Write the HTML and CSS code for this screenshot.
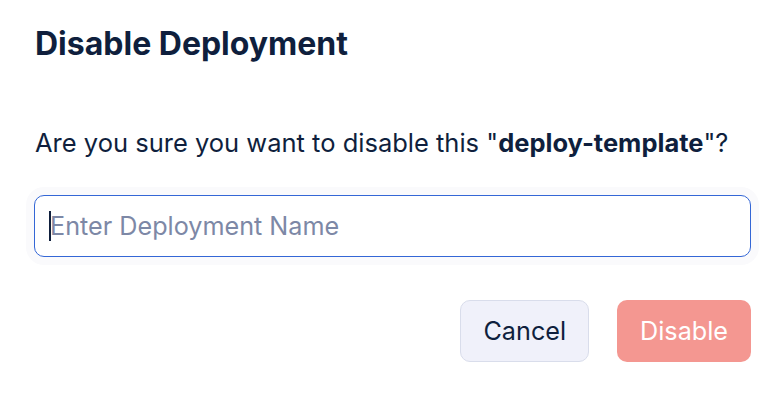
FILE: index.html
```html
<!DOCTYPE html>
<html lang="en">
<head>
<meta charset="UTF-8" />
<meta name="viewport" content="width=device-width, initial-scale=1" />
<title>Disable Deployment</title>
<link rel="stylesheet" href="styles.css">
</head>
<body>

<div class="modal">
  <h2 class="modal-title">Disable Deployment</h2>

  <p class="modal-text">Are you sure you want to disable this "<b>deploy-template</b>"?</p>

  <div class="field">
    <input id="deployName" type="text" placeholder="Enter Deployment Name" />
    <span class="caret"></span>
  </div>

  <div class="actions">
    <button class="btn btn-cancel">Cancel</button>
    <button class="btn btn-danger" disabled>Disable</button>
  </div>
</div>

</body>
</html>
```

FILE: styles.css
```css
body {
  margin: 0;
  background: #fff;
  color: #0f1f3d;
  font-family: Inter, 'Noto Sans', sans-serif;
}
.modal {
  padding: 24px 31px 36px 34px;
}
.modal-title {
  margin: 0;
  font-size: 32px;
  font-weight: 700;
  line-height: 40px;
  padding-left: 1px;
}
.modal-text {
  margin: 61px 0 0;
  font-size: 25.5px;
  line-height: 36px;
  padding-left: 1px;
}
.modal-text b {
  font-weight: 700;
}

/* input (focused look) */
.field {
  position: relative;
  margin-top: 34px;
}
.field input {
  box-sizing: border-box;
  display: block;
  width: 100%;
  height: 62px;
  padding: 0 15px;
  border: 1px solid #3467d6;
  border-radius: 10px;
  font-family: inherit;
  font-size: 25.2px;
  color: #0f1f3d;
  outline: none;
  box-shadow: 0 0 0 8px #fafafc;
}
.field input::placeholder {
  color: #7d88a6;
}
.caret {
  position: absolute;
  left: 15px;
  top: 16px;
  width: 2px;
  height: 30px;
  background: #0f1f3d;
}

.actions {
  display: flex;
  justify-content: flex-end;
  gap: 28px;
  margin-top: 43px;
}
.btn {
  box-sizing: border-box;
  height: 62px;
  padding: 0 22px;
  border-radius: 10px;
  font-family: inherit;
  font-size: 25.2px;
  cursor: pointer;
}
.btn-cancel {
  background: #f0f1fa;
  border: 1px solid #d9ddeb;
  color: #0f1f3d;
}
.btn-danger {
  background: #f49791;
  border: none;
  color: #fff;
  padding: 0 23px;
}
```
